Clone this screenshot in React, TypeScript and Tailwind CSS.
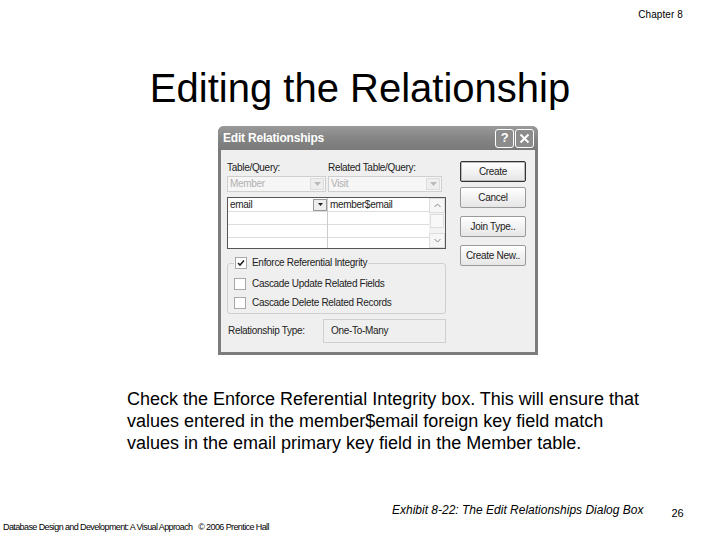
import React from 'react';

const slideFont = { fontFamily: '"Liberation Sans", Arial, sans-serif' };

export default function App() {
  return (
    <div className="flex h-[540px] w-[720px] flex-col overflow-hidden bg-white text-black" style={slideFont}>
      <div className="flex h-[30px] justify-end pr-[37px] pt-[9px] text-[10px] leading-[12px] tracking-[0.1px]">
        Chapter 8
      </div>

      <h1 className="mt-[35px] text-center text-[40px] leading-[46px] font-normal">Editing the Relationship</h1>

      <div className="ml-[218px] mt-[15px]">
        <Dialog />
      </div>

      <p className="ml-[127px] mt-[33px] text-[18px] leading-[22px]">
        Check the Enforce Referential Integrity box. This will ensure that
        <br />
        values entered in the member$email foreign key field match
        <br />
        values in the email primary key field in the Member table.
      </p>

      <div className="mt-[48px] flex items-start">
        <span className="ml-[392px] text-[12px] italic leading-[16px]">
          Exhibit 8-22: The Edit Relationships Dialog Box
        </span>
        <span className="ml-[28px] mt-[4px] text-[11px] leading-[14px]">26</span>
      </div>
      <div className="ml-[3px] mt-[1px] text-[9px] leading-[12px] tracking-[-0.6px]">
        Database Design and Development: A Visual Approach&nbsp;&nbsp; © 2006 Prentice Hall
      </div>
    </div>
  );
}

function Dialog() {
  return (
    <div className="flex h-[229px] w-[320px] flex-col rounded-t-[6px] border-[3px] border-t-0 border-[#7c7c7c] bg-[#efefef] text-[10px] leading-[12px] tracking-[-0.3px] text-[#222]">
      <div className="-mx-[3px] flex h-[24px] items-center rounded-t-[6px] bg-gradient-to-b from-[#9a9a9a] via-[#858585] to-[#7a7a7a] pl-[5px] pr-[4px]">
        <span className="flex-1 text-[12px] font-bold tracking-[-0.2px] text-white">Edit Relationships</span>
        <div className="flex gap-[1px]">
          <TitleBtn>?</TitleBtn>
          <TitleBtn>
            <svg width="11" height="11" viewBox="0 0 11 11">
              <path d="M1.5 1.5 L9.5 9.5 M9.5 1.5 L1.5 9.5" stroke="white" strokeWidth="2" />
            </svg>
          </TitleBtn>
        </div>
      </div>

      <div className="flex gap-[14px] pl-[6px] pt-[10px]">
        <div className="w-[219px]">
          <div className="mt-[2px] flex h-[12px]">
            <span className="w-[101px]">Table/Query:</span>
            <span>Related Table/Query:</span>
          </div>
          <div className="mt-[2px] flex gap-[2px]">
            <Combo w="w-[99px]" text="Member" />
            <Combo w="w-[114px]" text="Visit" />
          </div>

          <div className="mt-[5px] flex h-[52px] border border-[#555] bg-white">
            <div className="w-[100px] border-r border-[#ccc]">
              <div className="flex h-[14px] items-center border-b border-[#ddd] pl-[2px]">
                <span className="flex-1">email</span>
                <span className="flex h-[12px] w-[14px] items-center justify-center border border-[#999] bg-[#eee]">
                  <svg width="5" height="3" viewBox="0 0 5 3"><path d="M0 0 L5 0 L2.5 3 Z" fill="#222" /></svg>
                </span>
              </div>
              <div className="h-[13px] border-b border-[#ddd]" />
              <div className="h-[13px] border-b border-[#ddd]" />
            </div>
            <div className="flex-1">
              <div className="flex h-[14px] items-center border-b border-[#ddd] pl-[2px]">member$email</div>
              <div className="h-[13px] border-b border-[#ddd]" />
              <div className="h-[13px] border-b border-[#ddd]" />
            </div>
            <div className="flex w-[16px] flex-col bg-[#f3f3f3]">
              <div className="flex h-[15px] items-center justify-center border border-[#ddd] bg-[#f6f6f6]">
                <svg width="7" height="5" viewBox="0 0 7 5"><path d="M0.5 4 L3.5 1 L6.5 4" stroke="#888" fill="none" /></svg>
              </div>
              <div className="mx-[1px] mt-[1px] h-[14px] border border-[#ddd] bg-[#f8f8f8]" />
              <div className="flex-1" />
              <div className="flex h-[15px] items-center justify-center border border-[#ddd] bg-[#f6f6f6]">
                <svg width="7" height="5" viewBox="0 0 7 5"><path d="M0.5 1 L3.5 4 L6.5 1" stroke="#888" fill="none" /></svg>
              </div>
            </div>
          </div>

          <fieldset className="mt-[8px] h-[57px] rounded-[3px] border border-[#cfcfcf] px-[6px] pb-0">
            <legend className="flex items-center gap-[5px] px-[1px]">
              <Check checked />
              <span>Enforce Referential Integrity</span>
            </legend>
            <div className="mt-[9px] flex items-center gap-[6px]">
              <Check />
              <span>Cascade Update Related Fields</span>
            </div>
            <div className="mt-[7px] flex items-center gap-[6px]">
              <Check />
              <span>Cascade Delete Related Records</span>
            </div>
          </fieldset>

          <div className="mt-[5px] flex items-center">
            <span className="w-[96px] pl-[1px]">Relationship Type:</span>
            <div className="flex h-[24px] flex-1 items-center border border-[#cfcfcf] pl-[7px]">One-To-Many</div>
          </div>
        </div>

        <div className="flex w-[66px] flex-col">
          <Btn def mt="mt-[1px]">Create</Btn>
          <Btn mt="mt-[5px]">Cancel</Btn>
          <Btn mt="mt-[8px]">Join Type..</Btn>
          <Btn mt="mt-[8px]">Create New..</Btn>
        </div>
      </div>
    </div>
  );
}

function TitleBtn({ children }: { children: React.ReactNode }) {
  return (
    <div className="flex h-[19px] w-[19px] items-center justify-center rounded-[3px] border border-white bg-[#8c8c8c] text-[13px] font-bold text-white">
      {children}
    </div>
  );
}

function Combo({ w, text }: { w: string; text: string }) {
  return (
    <div className={`${w} flex h-[16px] items-center border border-[#cfcfcf] bg-[#f6f6f6] pl-[2px] text-[#b0b0b0]`}>
      <span className="flex-1">{text}</span>
      <span className="mr-[1px] flex h-[12px] w-[14px] items-center justify-center border border-[#ddd] bg-[#eee]">
        <svg width="7" height="4" viewBox="0 0 7 4"><path d="M0 0 L7 0 L3.5 4 Z" fill="#bbb" /></svg>
      </span>
    </div>
  );
}

function Check({ checked }: { checked?: boolean }) {
  return (
    <span className="flex h-[12px] w-[12px] items-center justify-center border border-[#a8a8a8] bg-white">
      {checked && (
        <svg width="8" height="8" viewBox="0 0 8 8">
          <path d="M1 4 L3 6 L7 1.5" stroke="#222" strokeWidth="1.6" fill="none" />
        </svg>
      )}
    </span>
  );
}

function Btn({ children, def, mt }: { children: React.ReactNode; def?: boolean; mt?: string }) {
  return (
    <div
      className={`${mt ?? ''} flex h-[21px] items-center justify-center rounded-[2px] border bg-gradient-to-b from-white to-[#e6e6e6] ${
        def ? 'border-[#333] shadow-[inset_0_0_0_1px_#bbb]' : 'border-[#9a9a9a]'
      }`}
    >
      {children}
    </div>
  );
}
